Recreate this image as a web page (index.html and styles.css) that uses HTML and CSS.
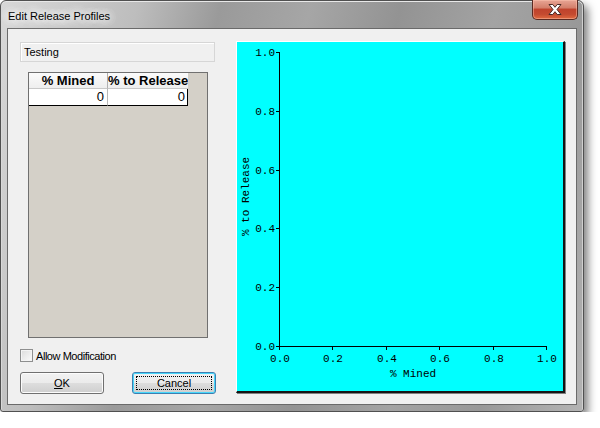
FILE: index.html
```html
<!DOCTYPE html>
<html>
<head>
<meta charset="utf-8">
<link rel="stylesheet" href="styles.css">
</head>
<body>
<div class="window">
  <div class="titlebar">
    <span class="title">Edit Release Profiles</span>
    <div class="close">
      <svg width="14" height="11" viewBox="0 0 14 11"><path d="M1 0.5 H4.8 L7 3.3 L9.2 0.5 H13 L9 5.5 L13 10.5 H9.2 L7 7.7 L4.8 10.5 H1 L5 5.5 Z" fill="#fff" stroke="#4a2a25" stroke-width="1" stroke-linejoin="round"/></svg>
    </div>
  </div>
  <div class="client">
    <div class="left">
      <div class="namebox">Testing</div>
      <div class="gridpanel">
        <div class="grid">
          <div class="hcell">% Mined</div>
          <div class="hcell last">% to Release</div>
          <div class="dcell">0</div>
          <div class="dcell last">0</div>
        </div>
      </div>
      <label class="check"><span class="box"></span><span>Allow Modification</span></label>
      <div class="buttons">
        <button class="btn"><u>O</u>K</button>
        <button class="btn focus"><span class="focusring">Cancel</span></button>
      </div>
    </div>
    <div class="plot">
      <svg width="326" height="349" viewBox="0 0 326 349" class="chart">
        <g stroke="#000" stroke-width="1" fill="none">
          <path d="M42.5 10 V305"/>
          <path d="M42 304.5 H310"/>
          <path d="M39 10.5 H43 M39 69.5 H43 M39 128.5 H43 M39 186.5 H43 M39 245.5 H43 M39 304.5 H43"/>
          <path d="M42.5 304 V308 M95.5 304 V308 M149.5 304 V308 M202.5 304 V308 M256.5 304 V308 M309.5 304 V308"/>
        </g>
        <g class="ticks" text-anchor="end">
          <text x="38" y="14">1.0</text>
          <text x="38" y="73">0.8</text>
          <text x="38" y="132">0.6</text>
          <text x="38" y="190">0.4</text>
          <text x="38" y="249">0.2</text>
          <text x="38" y="308">0.0</text>
        </g>
        <g class="ticks" text-anchor="middle">
          <text x="43" y="320">0.0</text>
          <text x="96" y="320">0.2</text>
          <text x="150" y="320">0.4</text>
          <text x="203" y="320">0.6</text>
          <text x="257" y="320">0.8</text>
          <text x="310" y="320">1.0</text>
        </g>
        <text class="ticks" x="176" y="335" text-anchor="middle">% Mined</text>
        <text class="ticks" transform="translate(12,154.5) rotate(-90)" text-anchor="middle">% to Release</text>
      </svg>
    </div>
  </div>
</div>
</body>
</html>
```
FILE: styles.css
```css
html, body {
  margin: 0;
  padding: 0;
  background: #ffffff;
}
body {
  font-family: "Liberation Sans", Arial, sans-serif;
  font-size: 11px;
  color: #000;
}
.window {
  width: 584px;
  height: 412px;
  box-sizing: border-box;
  border: 1px solid #505050;
  border-radius: 6px 6px 3px 3px;
  padding: 0 6px 6px 6px;
  display: flex;
  flex-direction: column;
  background: linear-gradient(105deg, #d8d8d8 0%, #bdbdbd 20%, #9a9a9a 32%, #a6a6a6 45%, #939393 58%, #a3a3a3 72%, #989898 85%, #b4b4b4 100%);
  box-shadow: 4px 5px 8px rgba(0, 0, 0, 0.5), inset 0 1px 0 #e8e8e8, inset 1px 0 0 #d8d8d8, inset -1px 0 0 #d0d0d0;
}
.titlebar {
  height: 27px;
  margin: 0 -6px;
  padding-left: 7px;
  position: relative;
  display: flex;
  align-items: center;
}
.title {
  font-size: 11px;
  margin-top: 2px;
  text-shadow: 0 0 8px #fff, 0 0 8px #fff, 0 0 12px #fff, 0 0 16px #fff;
  color: #000;
}
.close {
  position: absolute;
  top: -1px;
  right: 5px;
  width: 46px;
  height: 20px;
  box-sizing: border-box;
  border: 1px solid #5a2a22;
  border-top: none;
  border-radius: 0 0 5px 5px;
  background: linear-gradient(#e8a595 0%, #d4806c 40%, #c0432d 50%, #c44a30 75%, #e06a40 100%);
  box-shadow: inset 0 0 0 1px rgba(255, 200, 180, 0.45);
  display: flex;
  align-items: center;
  justify-content: center;
}
.close svg {
  display: block;
}
.client {
  flex: 1;
  border: 1px solid #6a6a6a;
  background: #f0f0f0;
  padding: 12px 10px 10px 12px;
  display: grid;
  grid-template-columns: 196px 330px;
  column-gap: 20px;
  align-items: start;
}
.left {
  margin-top: 1px;
  display: flex;
  flex-direction: column;
}
.namebox {
  height: 20px;
  box-sizing: border-box;
  border: 1px solid #d6d6d6;
  box-shadow: inset 1px 1px 0 #ffffff;
  padding: 3px 0 0 3px;
  width: 195px;
}
.gridpanel {
  margin: 10px 0 0 8px;
  width: 180px;
  height: 266px;
  box-sizing: border-box;
  border: 1px solid #707070;
  background: #d4d0c8;
}
.grid {
  display: grid;
  grid-template-columns: 79px 80px;
  grid-template-rows: 16px 17px;
}
.hcell {
  font-weight: bold;
  font-size: 13px;
  line-height: 15px;
  text-align: center;
  background: linear-gradient(#fbfbfb, #eeeeee);
  border-right: 1px solid #b0b0b0;
  border-bottom: 1px solid #c8c8c8;
  white-space: nowrap;
  overflow: hidden;
}
.hcell.last {
  border-right: none;
  text-align: left;
  padding-left: 0;
}
.dcell {
  font-size: 13px;
  line-height: 16px;
  text-align: right;
  padding-right: 3px;
  background: #fff;
  border-right: 1px solid #b8b8b8;
  border-bottom: 1px solid #000;
}
.dcell.last {
  border-right: 1px solid #000;
  padding-right: 2px;
}
.check {
  margin-top: 11px;
  height: 13px;
  display: flex;
  align-items: center;
  gap: 3px;
  letter-spacing: -0.45px;
}
.box {
  width: 13px;
  height: 13px;
  box-sizing: border-box;
  border: 1px solid #8e8f8f;
  background: linear-gradient(135deg, #dcdcdc, #fbfbfb);
  box-shadow: inset 0 0 0 1px #f4f4f4;
}
.buttons {
  margin-top: 10px;
  display: flex;
  gap: 28px;
}
.btn {
  width: 84px;
  height: 22px;
  box-sizing: border-box;
  border: 1px solid #707070;
  border-radius: 3px;
  background: linear-gradient(#f2f2f2 0%, #ebebeb 50%, #dddddd 51%, #cfcfcf 100%);
  box-shadow: inset 0 0 0 1px #fcfcfc;
  font-family: "Liberation Sans", Arial, sans-serif;
  font-size: 11px;
  color: #000;
  padding: 0;
  display: flex;
  align-items: center;
  justify-content: center;
}
.btn.focus {
  border-color: #3c7fb1;
  box-shadow: inset 0 0 0 1px #48d7fb;
  padding: 3px;
}
.focusring {
  flex: 1;
  align-self: stretch;
  border: 1px dotted #000;
  display: flex;
  align-items: center;
  justify-content: center;
}
.plot {
  width: 329px;
  height: 352px;
  box-sizing: border-box;
  border-top: 1px solid #ffffff;
  border-left: 1px solid #ffffff;
  border-right: 2px solid #151515;
  border-bottom: 2px solid #151515;
  box-shadow: 1px 1px 0 #808080;
  background: #00ffff;
}
.chart {
  display: block;
}
.ticks {
  font-family: "Liberation Mono", "Courier New", monospace;
  font-size: 11px;
  fill: #000;
}
```
